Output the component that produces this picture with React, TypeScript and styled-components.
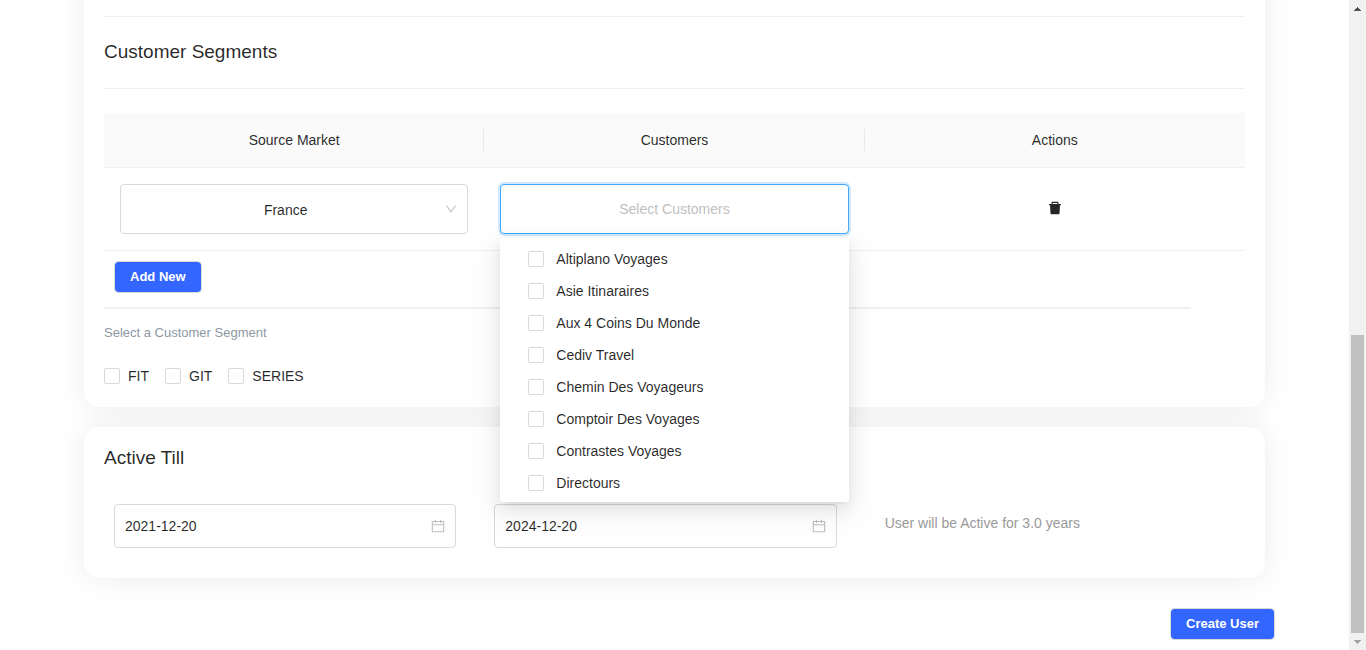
import React from "react";
import styled, { createGlobalStyle, css } from "styled-components";

const GlobalStyle = createGlobalStyle`
  *, *::before, *::after { box-sizing: border-box; }
  body {
    margin: 0;
    background: #fff;
    color: rgba(0, 0, 0, 0.85);
    font-family: Arial, "Liberation Sans", sans-serif;
    font-size: 14px;
    line-height: 22px;
  }
  button, input, select { font: inherit; color: inherit; }
`;

const Screen = styled.div`
  display: flex;
  height: 100vh;
  overflow: hidden;
`;

const Content = styled.main`
  flex: 1;
  min-width: 0;
  overflow: hidden;
  padding: 0 84px;
  display: flex;
  flex-direction: column;
  gap: 20px;
  isolation: isolate;
`;

const Card = styled.section<{ $continued?: boolean }>`
  position: relative;
  flex: none;
  padding: 20px;
  border-radius: 16px;
  background: #fff;

  &::before {
    content: "";
    position: absolute;
    inset: 0;
    z-index: -1;
    border-radius: inherit;
    box-shadow: 0 0 30px rgba(0, 0, 0, 0.08);
  }

  ${(p) =>
    p.$continued &&
    css`
      margin-top: -60px;
      padding-top: 76px;
    `}
`;

const Title = styled.h2`
  margin: 0;
  font-size: 19px;
  font-weight: 400;
  line-height: 22px;
`;

const Divider = styled.hr`
  height: 1px;
  margin: 0 0 24px;
  border: 0;
  background: #f0f0f0;
`;

const SectionHead = styled.div`
  padding-bottom: 25px;
`;

const ShortDivider = styled.hr`
  height: 2px;
  margin: 14px 54px 13px 0;
  border: 0;
  background: #f0f0f0;
`;

const Table = styled.table`
  width: 100%;
  table-layout: fixed;
  border-collapse: separate;
  border-spacing: 0;
  text-align: center;
`;

const HeadCell = styled.th`
  position: relative;
  padding: 16px;
  border-bottom: 1px solid #f0f0f0;
  background: #fafafa;
  font-weight: 400;

  &:not(:last-child)::after {
    content: "";
    position: absolute;
    top: 16px;
    right: 0;
    width: 1px;
    height: 22px;
    background: #e8e8e8;
  }
`;

const Cell = styled.td`
  padding: 16px;
  border-bottom: 1px solid #f0f0f0;
`;

const Field = styled.div`
  position: relative;
  display: flex;
`;

const fieldBox = css`
  width: 100%;
  border: 1px solid #d9d9d9;
  border-radius: 4px;
  background: #fff;
  outline: none;
`;

const MarketSelect = styled.select`
  ${fieldBox}
  height: 50px;
  padding: 2px 28px 0 11px;
  appearance: none;
  text-align: center;
  text-align-last: center;
`;

const CustomerInput = styled.input`
  ${fieldBox}
  height: 50px;
  padding: 0 11px;
  border-color: #40a9ff;
  box-shadow: 0 0 0 2px rgba(24, 144, 255, 0.2);
  text-align: center;

  &::placeholder { color: #bfbfbf; opacity: 1; }
`;

const FieldIcon = styled.span`
  position: absolute;
  top: 0;
  right: 11px;
  height: 100%;
  display: flex;
  align-items: center;
  color: rgba(0, 0, 0, 0.25);
  pointer-events: none;
`;

const Menu = styled.div`
  position: absolute;
  top: 54px;
  left: 0;
  z-index: 10;
  width: 100%;
  padding: 5px 28px 3px;
  border-radius: 2px;
  background: #fff;
  box-shadow: 0 3px 6px -4px rgba(0, 0, 0, 0.12),
    0 6px 16px 0 rgba(0, 0, 0, 0.08), 0 9px 28px 8px rgba(0, 0, 0, 0.05);
  text-align: left;
`;

const CheckLabel = styled.label<{ $gap: number; $height: number }>`
  display: flex;
  align-items: center;
  gap: ${(p) => p.$gap}px;
  height: ${(p) => p.$height}px;
`;

const CheckBox = styled.input`
  flex: none;
  width: 16px;
  height: 16px;
  margin: 0;
  appearance: none;
  border: 1px solid #d9d9d9;
  border-radius: 2px;
  background: #fff;

  &:checked { border-color: #3366ff; background: #3366ff; }
`;

const IconButton = styled.button`
  display: flex;
  margin: 0 auto;
  padding: 0 0 2px;
  border: 0;
  background: none;
`;

const PrimaryButton = styled.button`
  height: 32px;
  padding: 0 15px;
  border: 1px solid #d9d9d9;
  border-radius: 4px;
  background: #3366ff;
  background-clip: padding-box;
  color: #fff;
  font-size: 13px;
  font-weight: 700;
  line-height: 22px;
`;

const TableActions = styled.div`
  padding: 10px 10px 0;
  display: flex;
`;

const Segments = styled.fieldset`
  margin: 0;
  padding: 0;
  border: 0;
`;

const SegmentsLegend = styled.legend`
  padding: 0;
  margin-bottom: 21px;
  color: #8c98a4;
  font-size: 13px;
`;

const SegmentRow = styled.div`
  display: flex;
  gap: 16px;
`;

const DateGrid = styled.div`
  display: grid;
  grid-template-columns: repeat(3, 1fr);
  padding: 35px 0 10px;
`;

const DateCell = styled.div`
  padding: 0 28px 0 10px;
`;

const DateInput = styled.input`
  ${fieldBox}
  height: 44px;
  padding: 0 36px 0 10px;
`;

const Note = styled.p`
  margin: 0;
  padding: 8px 20px;
  color: #999;
`;

const Footer = styled.footer`
  display: flex;
  justify-content: flex-end;
  margin: 10px -10px 0 0;
`;

const ScrollTrack = styled.div`
  flex: none;
  width: 17px;
  display: flex;
  flex-direction: column;
  align-items: center;
  background: #f1f1f1;
`;

const ScrollArrow = styled.span<{ $dim?: boolean }>`
  display: flex;
  align-items: center;
  justify-content: center;
  height: 17px;
  color: ${(p) => (p.$dim ? "#a3a3a3" : "#505050")};
`;

const ScrollSpace = styled.div`
  flex: 318;
`;

const ScrollThumb = styled.div`
  flex: 298;
  width: 13px;
  background: #c1c1c1;
`;

const AntIcon = ({ d, size }: { d: string; size: number }) => (
  <svg viewBox="64 64 896 896" width={size} height={size} fill="currentColor" aria-hidden="true">
    <path d={d} />
  </svg>
);

const DOWN =
  "M884 256h-75c-5.1 0-9.9 2.5-12.9 6.6L512 654.2 227.9 262.6c-3-4.1-7.8-6.6-12.9-6.6h-75c-6.5 0-10.3 7.4-6.5 12.7l352.6 486.1c12.8 17.6 39 17.6 51.7 0l352.6-486.1c3.9-5.3.1-12.7-6.4-12.7z";
const CALENDAR =
  "M880 184H712v-64c0-4.4-3.6-8-8-8h-56c-4.4 0-8 3.6-8 8v64H384v-64c0-4.4-3.6-8-8-8h-56c-4.4 0-8 3.6-8 8v64H144c-17.7 0-32 14.3-32 32v664c0 17.7 14.3 32 32 32h736c17.7 0 32-14.3 32-32V216c0-17.7-14.3-32-32-32zm-40 656H184V460h656v380zM184 392V256h128v48c0 4.4 3.6 8 8 8h56c4.4 0 8-3.6 8-8v-48h256v48c0 4.4 3.6 8 8 8h56c4.4 0 8-3.6 8-8v-48h128v136H184z";
const DELETE =
  "M864 256H736v-80c0-35.3-28.7-64-64-64H352c-35.3 0-64 28.7-64 64v80H160c-17.7 0-32 14.3-32 32v32c0 4.4 3.6 8 8 8h60.4l24.7 523c1.6 34.1 29.8 61 63.9 61h454c34.2 0 62.3-26.8 63.9-61l24.7-523H888c4.4 0 8-3.6 8-8v-32c0-17.7-14.3-32-32-32zm-200 0H360v-72h304v72z";

const customers = [
  "Altiplano Voyages",
  "Asie Itinaraires",
  "Aux 4 Coins Du Monde",
  "Cediv Travel",
  "Chemin Des Voyageurs",
  "Comptoir Des Voyages",
  "Contrastes Voyages",
  "Directours",
];

const segments = ["FIT", "GIT", "SERIES"];

const DateField = ({ label, value }: { label: string; value: string }) => (
  <DateCell>
    <Field>
      <DateInput type="text" aria-label={label} defaultValue={value} />
      <FieldIcon>
        <AntIcon d={CALENDAR} size={14} />
      </FieldIcon>
    </Field>
  </DateCell>
);

export default function App() {
  return (
    <>
      <GlobalStyle />
      <Screen>
        <Content>
          <Card $continued>
            <Divider />
            <SectionHead>
              <Title>Customer Segments</Title>
            </SectionHead>
            <Divider />
            <Table>
              <thead>
                <tr>
                  <HeadCell scope="col">Source Market</HeadCell>
                  <HeadCell scope="col">Customers</HeadCell>
                  <HeadCell scope="col">Actions</HeadCell>
                </tr>
              </thead>
              <tbody>
                <tr>
                  <Cell>
                    <Field>
                      <MarketSelect aria-label="Source Market" defaultValue="France">
                        <option>France</option>
                      </MarketSelect>
                      <FieldIcon>
                        <AntIcon d={DOWN} size={12} />
                      </FieldIcon>
                    </Field>
                  </Cell>
                  <Cell>
                    <Field>
                      <CustomerInput type="text" aria-label="Customers" placeholder="Select Customers" />
                      <Menu>
                        {customers.map((name) => (
                          <CheckLabel key={name} $gap={12} $height={32}>
                            <CheckBox type="checkbox" />
                            {name}
                          </CheckLabel>
                        ))}
                      </Menu>
                    </Field>
                  </Cell>
                  <Cell>
                    <IconButton type="button" aria-label="Delete row">
                      <AntIcon d={DELETE} size={14} />
                    </IconButton>
                  </Cell>
                </tr>
              </tbody>
            </Table>
            <TableActions>
              <PrimaryButton type="button">Add New</PrimaryButton>
            </TableActions>
            <ShortDivider />
            <Segments>
              <SegmentsLegend>Select a Customer Segment</SegmentsLegend>
              <SegmentRow>
                {segments.map((name) => (
                  <CheckLabel key={name} $gap={8} $height={22}>
                    <CheckBox type="checkbox" />
                    {name}
                  </CheckLabel>
                ))}
              </SegmentRow>
            </Segments>
          </Card>

          <Card>
            <Title>Active Till</Title>
            <DateGrid>
              <DateField label="Active from" value="2021-12-20" />
              <DateField label="Active till" value="2024-12-20" />
              <Note>User will be Active for 3.0 years</Note>
            </DateGrid>
          </Card>

          <Footer>
            <PrimaryButton type="button">Create User</PrimaryButton>
          </Footer>
        </Content>

        <ScrollTrack aria-hidden="true">
          <ScrollArrow>
            <svg width="7" height="4" viewBox="0 0 7 4" fill="currentColor" shapeRendering="crispEdges">
              <path d="M3 0h1v1h1v1h1v1h1v1H0V3h1V2h1V1h1z" />
            </svg>
          </ScrollArrow>
          <ScrollSpace />
          <ScrollThumb />
          <ScrollArrow $dim>
            <svg width="7" height="4" viewBox="0 0 7 4" fill="currentColor" shapeRendering="crispEdges">
              <path d="M0 0h7v1H6v1H5v1H4v1H3V3H2V2H1V1H0z" />
            </svg>
          </ScrollArrow>
        </ScrollTrack>
      </Screen>
    </>
  );
}
